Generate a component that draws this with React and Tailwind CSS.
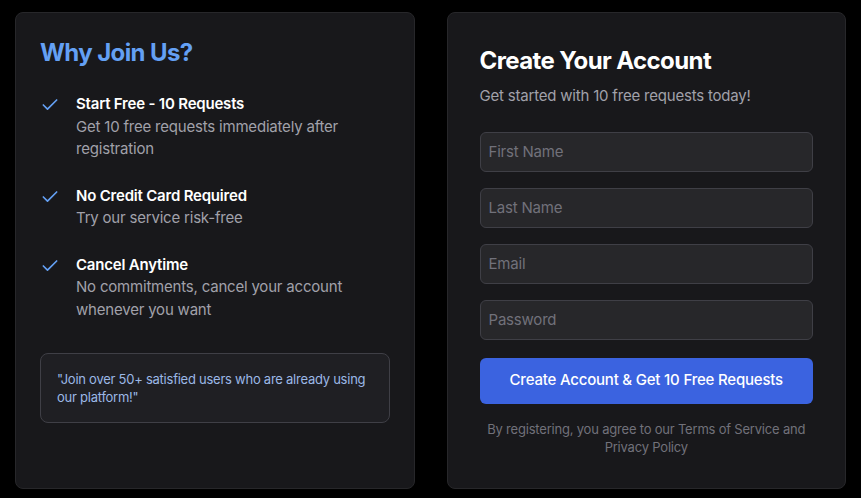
import { Check } from 'lucide-react'

const benefits = [
  { title: 'Start Free - 10 Requests', text: 'Get 10 free requests immediately after registration' },
  { title: 'No Credit Card Required', text: 'Try our service risk-free' },
  { title: 'Cancel Anytime', text: 'No commitments, cancel your account whenever you want' },
]

const fields = ['First Name', 'Last Name', 'Email', 'Password']

export default function App() {
  return (
    <div className="min-h-screen bg-black px-[15px] pt-3 font-['Inter',sans-serif]">
      <div className="grid grid-cols-2 gap-8">
        {/* Benefits */}
        <div className="rounded-lg border border-[#27272a] bg-[#18181b] p-6">
          <h2 className="mb-6 text-2xl font-bold tracking-[-0.6px] text-[#64a0f4]">Why Join Us?</h2>
          <div className="space-y-6">
            {benefits.map((b) => (
              <div key={b.title} className="flex gap-4">
                <Check className="mt-0.5 h-5 w-5 shrink-0 text-[#64a0f4]" strokeWidth={2} />
                <div className="text-[15px] leading-[22.5px] tracking-[-0.2px]">
                  <p className="font-semibold text-white">{b.title}</p>
                  <p className="text-[#a1a1aa]">{b.text}</p>
                </div>
              </div>
            ))}
          </div>
          <div className="mt-8 rounded-lg border border-[#3f3f46] bg-[#1f1f23] p-4">
            <p className="text-[13px] leading-[18px] tracking-[-0.25px] text-[#9bb8e6]">
              "Join over 50+ satisfied users who are already using our platform!"
            </p>
          </div>
        </div>

        {/* Sign up form */}
        <div className="rounded-lg border border-[#27272a] bg-[#18181b] p-8">
          <h2 className="text-2xl font-bold tracking-[-0.6px] text-white">Create Your Account</h2>
          <p className="mt-2 text-[15px] tracking-[-0.2px] text-[#a1a1aa]">Get started with 10 free requests today!</p>
          <form className="mt-6 flex flex-col gap-4">
            {fields.map((f) => (
              <input
                key={f}
                type={f === 'Password' ? 'password' : f === 'Email' ? 'email' : 'text'}
                placeholder={f}
                className="block h-10 w-full rounded-md border border-[#3f3f46] bg-[#27272a] px-2 text-[15px] tracking-[-0.2px] text-white placeholder:text-[#71717a] outline-none"
              />
            ))}
            <button
              type="button"
              className="mt-[2px] h-[46px] w-full rounded-md bg-[#3b63e0] text-[15px] font-medium tracking-[-0.2px] text-white"
            >
              Create Account &amp; Get 10 Free Requests
            </button>
          </form>
          <p className="mt-4 text-center text-[13px] leading-[18px] tracking-[-0.2px] text-[#71717a]">
            By registering, you agree to our Terms of Service and Privacy Policy
          </p>
        </div>
      </div>
    </div>
  )
}
